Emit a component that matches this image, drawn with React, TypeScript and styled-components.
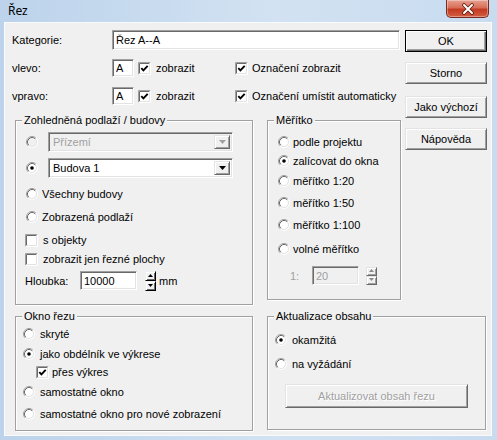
import React from "react";
import styled, { createGlobalStyle, css } from "styled-components";

const Global = createGlobalStyle`
  html, body { margin: 0; padding: 0; background: #fff; }
  body { font-family: "Liberation Sans", Arial, sans-serif; font-size: 11px; color: #000; }
  * { box-sizing: border-box; }
`;

const sunken = css`
  border: 1px solid;
  border-color: #a0a0a0 #ffffff #ffffff #a0a0a0;
  box-shadow: inset 1px 1px 0 #696969, inset -1px -1px 0 #e3e3e3;
`;

const raised = css`
  background: #f0f0f0;
  border: 1px solid;
  border-color: #e3e3e3 #696969 #696969 #e3e3e3;
  box-shadow: inset 1px 1px 0 #ffffff, inset -1px -1px 0 #a0a0a0;
`;

const Window = styled.div`
  width: 497px;
  height: 440px;
  display: flex;
  flex-direction: column;
  overflow: hidden;
  background: linear-gradient(90deg, #bcd3eb 0%, #d2e2f2 55%, #c8dbef 100%);
`;

const TitleBar = styled.div`
  height: 22px;
  flex-shrink: 0;
  display: flex;
  justify-content: space-between;
  align-items: flex-start;
  padding: 0 8px;
`;

const Title = styled.div`
  font-family: "Noto Sans", "Open Sans", sans-serif;
  font-size: 12px;
  line-height: 21px;
  color: #000;
`;

const CloseBtn = styled.div`
  width: 43px;
  height: 18px;
  border: 1px solid #7a2b20;
  border-top: none;
  border-radius: 0 0 5px 5px;
  background: linear-gradient(180deg, #e6a090 0%, #d86f58 45%, #c23a22 55%, #d25d40 100%);
  display: flex;
  align-items: center;
  justify-content: center;
  box-shadow: inset 0 0 0 1px rgba(255, 255, 255, 0.35);
`;

const Client = styled.div`
  flex: 1;
  margin: 0 5px 4px 4px;
  background: #f0f0f0;
  border: 1px solid #f8fbfe;
  padding: 7px 0 0 7px;
  display: flex;
  flex-direction: column;
`;

const Top = styled.div`
  display: flex;
  align-items: flex-start;
`;

const LeftCol = styled.div`
  width: 388px;
  display: flex;
  flex-direction: column;
`;

const ButtonCol = styled.div`
  width: 82px;
  margin-left: 5px;
  display: flex;
  flex-direction: column;
`;

const Row = styled.div<{ $h?: number; $mt?: number }>`
  display: flex;
  align-items: center;
  height: ${(p) => p.$h ?? 18}px;
  margin-top: ${(p) => p.$mt ?? 0}px;
  white-space: nowrap;
`;

const FieldLabel = styled.span<{ $w: number; $muted?: boolean }>`
  width: ${(p) => p.$w}px;
  flex-shrink: 0;
  color: ${(p) => (p.$muted ? "#a0a0a0" : "#000")};
`;

const Field = styled.input<{ $w: number; $h: number; $disabled?: boolean; $ml?: number }>`
  ${sunken};
  width: ${(p) => p.$w}px;
  height: ${(p) => p.$h}px;
  margin: 0 0 0 ${(p) => p.$ml ?? 0}px;
  padding: 0 0 0 3px;
  font: inherit;
  background: ${(p) => (p.$disabled ? "#f0f0f0" : "#fff")};
  color: ${(p) => (p.$disabled ? "#a0a0a0" : "#000")};
  outline: none;
`;

const Option = styled.div<{ $gap: number; $ml?: number; $w?: number; $muted?: boolean }>`
  display: flex;
  align-items: center;
  gap: ${(p) => p.$gap}px;
  margin-left: ${(p) => p.$ml ?? 0}px;
  width: ${(p) => (p.$w ? `${p.$w}px` : "auto")};
  flex-shrink: 0;
  color: ${(p) => (p.$muted ? "#a0a0a0" : "#000")};
`;

const GroupRow = styled.div<{ $mt: number }>`
  display: flex;
  align-items: flex-start;
  margin-top: ${(p) => p.$mt}px;
`;

const Group = styled.div<{ $w: number; $h: number; $ml: number; $pl: number }>`
  position: relative;
  width: ${(p) => p.$w}px;
  height: ${(p) => p.$h}px;
  margin-left: ${(p) => p.$ml}px;
  padding-left: ${(p) => p.$pl}px;
  border: 1px solid #a0a0a0;
  box-shadow: inset 1px 1px 0 #fff, 1px 1px 0 #fff;
  display: flex;
  flex-direction: column;
  flex-shrink: 0;
`;

const Legend = styled.span`
  position: absolute;
  top: -7px;
  left: 6px;
  padding: 0 2px;
  line-height: 13px;
  background: #f0f0f0;
  white-space: nowrap;
`;

const ComboBox = styled.div<{ $disabled?: boolean }>`
  ${sunken};
  width: 185px;
  height: 20px;
  padding: 2px;
  display: flex;
  align-items: stretch;
  background: ${(p) => (p.$disabled ? "#f0f0f0" : "#fff")};
  color: ${(p) => (p.$disabled ? "#a0a0a0" : "#000")};
`;

const ComboText = styled.span`
  flex: 1;
  padding-left: 2px;
  display: flex;
  align-items: center;
`;

const ComboArrow = styled.span`
  ${raised};
  width: 16px;
  display: flex;
  align-items: center;
  justify-content: center;
`;

const Btn = styled.div<{ $default?: boolean; $disabled?: boolean; $w?: number; $h?: number; $mt?: number; $ml?: number }>`
  ${raised};
  width: ${(p) => p.$w ?? 82}px;
  height: ${(p) => p.$h ?? 22}px;
  margin-top: ${(p) => p.$mt ?? 0}px;
  margin-left: ${(p) => p.$ml ?? 0}px;
  display: flex;
  align-items: center;
  justify-content: center;
  flex-shrink: 0;
  color: ${(p) => (p.$disabled ? "#a0a0a0" : "#000")};
  text-shadow: ${(p) => (p.$disabled ? "1px 1px 0 #fff" : "none")};
  ${(p) =>
    p.$default &&
    css`
      border: 1px solid #000;
      box-shadow: inset 1px 1px 0 #fff, inset -1px -1px 0 #696969, inset -2px -2px 0 #a0a0a0;
    `}
`;

const Spin = styled.div<{ $h: number; $ml: number }>`
  display: flex;
  flex-direction: column;
  width: 11px;
  height: ${(p) => p.$h}px;
  margin-left: ${(p) => p.$ml}px;
  flex-shrink: 0;
`;

const SpinHalf = styled.div<{ $disabled?: boolean }>`
  flex: 1;
  display: flex;
  align-items: center;
  justify-content: center;
  background: #f0f0f0;
  border: 1px solid;
  border-color: ${(p) => (p.$disabled ? "#e3e3e3 #696969 #696969 #e3e3e3" : "#f0f0f0 #000 #000 #f0f0f0")};
  box-shadow: ${(p) =>
    p.$disabled
      ? "inset 1px 1px 0 #fff, inset -1px -1px 0 #a0a0a0"
      : "inset 1px 1px 0 #fff, inset -1px -1px 0 #696969"};
`;

const Unit = styled.span`
  margin-left: 3px;
`;

const R = 6;
const arc = (r: number) => {
  const d = r * Math.SQRT1_2;
  return {
    bl: `${(R - d).toFixed(2)} ${(R + d).toFixed(2)}`,
    tr: `${(R + d).toFixed(2)} ${(R - d).toFixed(2)}`,
  };
};

function Radio({ checked, disabled }: { checked?: boolean; disabled?: boolean }) {
  const o = arc(5.5);
  const i = arc(4.5);
  return (
    <svg width="12" height="12" viewBox="0 0 12 12" style={{ flexShrink: 0 }}>
      <circle cx="6" cy="6" r="4.5" fill={disabled ? "#f0f0f0" : "#fff"} />
      <path d={`M${o.bl} A5.5 5.5 0 0 1 ${o.tr}`} stroke="#a0a0a0" fill="none" />
      <path d={`M${o.tr} A5.5 5.5 0 0 1 ${o.bl}`} stroke="#ffffff" fill="none" />
      <path d={`M${i.bl} A4.5 4.5 0 0 1 ${i.tr}`} stroke="#696969" fill="none" />
      <path d={`M${i.tr} A4.5 4.5 0 0 1 ${i.bl}`} stroke="#e3e3e3" fill="none" />
      {checked && <circle cx="6" cy="6" r="1.8" fill="#000" />}
    </svg>
  );
}

function Check({ checked }: { checked?: boolean }) {
  return (
    <svg width="13" height="13" viewBox="0 0 13 13" style={{ flexShrink: 0 }}>
      <rect x="1" y="1" width="11" height="11" fill="#fff" />
      <path d="M0.5 12.5V0.5H12.5" stroke="#a0a0a0" fill="none" />
      <path d="M1.5 11.5V1.5H11.5" stroke="#696969" fill="none" />
      <path d="M0.5 12.5H12.5V0.5" stroke="#fff" fill="none" />
      <path d="M1.5 11.5H11.5V1.5" stroke="#e3e3e3" fill="none" />
      {checked && (
        <path d="M3.3 6.2L5.4 8.4L9.7 3.9" stroke="#000" strokeWidth="1.9" fill="none" />
      )}
    </svg>
  );
}

function Tri({ color }: { color: string }) {
  return (
    <svg width="7" height="4" viewBox="0 0 7 4">
      <path d="M0 0L7 0L3.5 4Z" fill={color} />
    </svg>
  );
}

function SpinCtl({ h, ml, disabled }: { h: number; ml: number; disabled?: boolean }) {
  const c = disabled ? "#8a8a8a" : "#000";
  return (
    <Spin $h={h} $ml={ml}>
      <SpinHalf $disabled={disabled}>
        <svg width="5" height="4" viewBox="0 0 5 4">
          <path d="M0 3L2.5 0L5 3Z" fill={c} />
        </svg>
      </SpinHalf>
      <SpinHalf $disabled={disabled}>
        <svg width="5" height="4" viewBox="0 0 5 4">
          <path d="M0 0L5 0L2.5 3Z" fill={c} />
        </svg>
      </SpinHalf>
    </Spin>
  );
}

function Combo({ text, disabled }: { text: string; disabled?: boolean }) {
  return (
    <ComboBox $disabled={disabled}>
      <ComboText>{text}</ComboText>
      <ComboArrow>
        <Tri color={disabled ? "#a0a0a0" : "#000"} />
      </ComboArrow>
    </ComboBox>
  );
}

export default function App() {
  return (
    <>
      <Global />
      <Window>
        <TitleBar>
          <Title>Řez</Title>
          <CloseBtn>
            <svg width="14" height="12" viewBox="0 0 14 12">
              <path d="M3 2L11 10M11 2L3 10" stroke="#5a1a10" strokeWidth="3.6" strokeLinecap="round" />
              <path d="M3 2L11 10M11 2L3 10" stroke="#fff" strokeWidth="2" strokeLinecap="round" />
            </svg>
          </CloseBtn>
        </TitleBar>
        <Client>
          <Top>
            <LeftCol>
              <Row $h={20}>
                <FieldLabel $w={100}>Kategorie:</FieldLabel>
                <Field $w={288} $h={20} value="Řez A--A" readOnly />
              </Row>
              <Row $h={18} $mt={9}>
                <FieldLabel $w={100}>vlevo:</FieldLabel>
                <Field $w={22} $h={18} value="A" readOnly />
                <Option $gap={5} $ml={4} $w={97}>
                  <Check checked />
                  zobrazit
                </Option>
                <Option $gap={4}>
                  <Check checked />
                  Označení zobrazit
                </Option>
              </Row>
              <Row $h={18} $mt={10}>
                <FieldLabel $w={100}>vpravo:</FieldLabel>
                <Field $w={22} $h={18} value="A" readOnly />
                <Option $gap={5} $ml={4} $w={97}>
                  <Check checked />
                  zobrazit
                </Option>
                <Option $gap={4}>
                  <Check checked />
                  Označení umístit automaticky
                </Option>
              </Row>
              <GroupRow $mt={15}>
                <Group $w={238} $h={185} $ml={3} $pl={9}>
                  <Legend>Zohledněná podlaží / budovy</Legend>
                  <Row $h={20} $mt={11}>
                    <Option $gap={10} $ml={1}>
                      <Radio disabled />
                      <Combo text="Přízemí" disabled />
                    </Option>
                  </Row>
                  <Row $h={20} $mt={6}>
                    <Option $gap={10} $ml={1}>
                      <Radio checked />
                      <Combo text="Budova 1" />
                    </Option>
                  </Row>
                  <Row $mt={7}>
                    <Option $gap={4} $ml={1}>
                      <Radio />
                      Všechny budovy
                    </Option>
                  </Row>
                  <Row $mt={5}>
                    <Option $gap={4} $ml={1}>
                      <Radio />
                      Zobrazená podlaží
                    </Option>
                  </Row>
                  <Row $mt={5}>
                    <Option $gap={5}>
                      <Check />
                      s objekty
                    </Option>
                  </Row>
                  <Row $mt={1}>
                    <Option $gap={5}>
                      <Check />
                      zobrazit jen řezné plochy
                    </Option>
                  </Row>
                  <Row $h={19} $mt={3}>
                    <FieldLabel $w={55}>Hloubka:</FieldLabel>
                    <Field $w={57} $h={19} value="10000" readOnly />
                    <SpinCtl h={20} ml={8} />
                    <Unit>mm</Unit>
                  </Row>
                </Group>
                <Group $w={134} $h={180} $ml={14} $pl={10}>
                  <Legend>Měřítko</Legend>
                  <Row $mt={12}>
                    <Option $gap={3}>
                      <Radio />
                      podle projektu
                    </Option>
                  </Row>
                  <Row $mt={1}>
                    <Option $gap={3}>
                      <Radio checked />
                      zalícovat do okna
                    </Option>
                  </Row>
                  <Row $mt={2}>
                    <Option $gap={3}>
                      <Radio />
                      měřítko 1:20
                    </Option>
                  </Row>
                  <Row $mt={4}>
                    <Option $gap={3}>
                      <Radio />
                      měřítko 1:50
                    </Option>
                  </Row>
                  <Row $mt={4}>
                    <Option $gap={3}>
                      <Radio />
                      měřítko 1:100
                    </Option>
                  </Row>
                  <Row $mt={6}>
                    <Option $gap={3}>
                      <Radio />
                      volné měřítko
                    </Option>
                  </Row>
                  <Row $h={19} $mt={8}>
                    <Option $gap={0} $ml={12} $w={22} $muted>
                      1:
                    </Option>
                    <Field $w={47} $h={19} value="20" $disabled readOnly />
                    <SpinCtl h={18} ml={7} disabled />
                  </Row>
                </Group>
              </GroupRow>
            </LeftCol>
            <ButtonCol>
              <Btn $default>OK</Btn>
              <Btn $mt={10}>Storno</Btn>
              <Btn $mt={12}>Jako výchozí</Btn>
              <Btn $mt={10}>Nápověda</Btn>
            </ButtonCol>
          </Top>
          <GroupRow $mt={11}>
            <Group $w={238} $h={115} $ml={3} $pl={7}>
              <Legend>Okno řezu</Legend>
              <Row $mt={8}>
                <Option $gap={5}>
                  <Radio />
                  skryté
                </Option>
              </Row>
              <Row $mt={2}>
                <Option $gap={5}>
                  <Radio checked />
                  jako obdélník ve výkrese
                </Option>
              </Row>
              <Row $mt={0}>
                <Option $gap={3} $ml={13}>
                  <Check checked />
                  přes výkres
                </Option>
              </Row>
              <Row $mt={2}>
                <Option $gap={5}>
                  <Radio />
                  samostatné okno
                </Option>
              </Row>
              <Row $mt={4}>
                <Option $gap={5}>
                  <Radio />
                  samostatné okno pro nové zobrazení
                </Option>
              </Row>
            </Group>
            <Group $w={219} $h={114} $ml={14} $pl={7}>
              <Legend>Aktualizace obsahu</Legend>
              <Row $mt={14}>
                <Option $gap={5}>
                  <Radio checked />
                  okamžitá
                </Option>
              </Row>
              <Row $mt={6}>
                <Option $gap={5}>
                  <Radio />
                  na vyžádání
                </Option>
              </Row>
              <Btn $disabled $w={183} $h={24} $mt={11} $ml={10}>
                Aktualizovat obsah řezu
              </Btn>
            </Group>
          </GroupRow>
        </Client>
      </Window>
    </>
  );
}
